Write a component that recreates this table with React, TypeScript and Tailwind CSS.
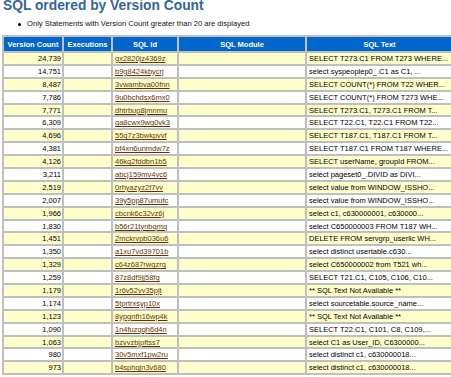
import React from "react";

const rows: [string, string, string][] = [
  ["24,739", "gx2820jz4369z", "SELECT T273.C1 FROM T273 WHERE..."],
  ["14,751", "b9g8424kbycrj", "select syspeoplep0_.C1 as C1, ..."],
  ["8,487", "3vwambva00fnn", "SELECT COUNT(*) FROM T22 WHER..."],
  ["7,786", "9u0bchdsx6mx0", "SELECT COUNT(*) FROM T273 WHE..."],
  ["7,771", "dhtrbup8jmnmu", "SELECT T273.C1, T273.C1 FROM T..."],
  ["6,309", "ga8cwx9wg0vk3", "SELECT T22.C1, T22.C1 FROM T22..."],
  ["4,696", "55q7z3bwkpvvf", "SELECT T187.C1, T187.C1 FROM T..."],
  ["4,381", "bf4xn6unmdw7z", "SELECT T187.C1 FROM T187 WHERE..."],
  ["4,126", "46kq2fddbn1b5", "SELECT userName, groupId FROM..."],
  ["3,211", "abcj159mv4vc6", "select pageset0_.DIVID as DIVI..."],
  ["2,519", "0rhyazyz2f7vv", "select value from WINDOW_ISSHO..."],
  ["2,007", "39y5pp87umufc", "select value from WINDOW_ISSHO..."],
  ["1,966", "cbcnk6c32vz6j", "select c1, c630000001, c630000..."],
  ["1,830", "b56r21tynbqmq", "select C650000003 FROM T187 WH..."],
  ["1,451", "2mckrvpb036u6", "DELETE FROM servgrp_userlic WH..."],
  ["1,350", "a1xu7vd39701b", "select distinct usertable.c630..."],
  ["1,329", "c64z687rwgzrg", "select C650000002 from T521 wh..."],
  ["1,259", "87z8df9jj58fg", "SELECT T21.C1, C105, C106, C10..."],
  ["1,179", "1r6v52vv35pjt", "** SQL Text Not Available **"],
  ["1,174", "5tprtrxsyp10x", "select sourcetable.source_name..."],
  ["1,123", "8ypgnfh16wp4k", "** SQL Text Not Available **"],
  ["1,090", "1n4fuzqqh6d4n", "SELECT T22.C1, C101, C8, C109,..."],
  ["1,063", "bzvvzbjpftss7", "select C1 as User_ID, C6300000..."],
  ["980", "30v5mxf1pw2ru", "select distinct c1, c630000018..."],
  ["973", "b4sphqjn3v680", "select distinct c1, c630000018..."],
];

const font = { fontFamily: '"Liberation Sans", Arial, sans-serif' };

export default function App() {
  return (
    <div
      className="w-[451px] h-[377px] overflow-hidden bg-white text-black"
      style={font}
    >
      <h3 className="mt-[-2px] ml-[3px] text-[13.8px] leading-[15px] font-bold text-[#336699] whitespace-nowrap">
        SQL ordered by Version Count
      </h3>
      <ul className="mt-[6px] ml-[18px]">
        <li className="flex items-center text-[7.6px] leading-[10px] whitespace-nowrap text-[#111]">
          <span className="w-[3px] h-[3px] rounded-full bg-black mr-[6px]" />
          Only Statements with Version Count greater than 20 are displayed
        </li>
      </ul>
      <table className="mt-[6px] ml-[2px] table-fixed border-separate border-spacing-[2px] bg-[#bfbfbf] w-[452px] text-[7.5px] leading-[9px]">
        <colgroup>
          <col className="w-[58px]" />
          <col className="w-[47px]" />
          <col className="w-[64px]" />
          <col className="w-[126px]" />
          <col className="w-[145px]" />
        </colgroup>
        <thead>
          <tr className="h-[14px]">
            {["Version Count", "Executions", "SQL Id", "SQL Module", "SQL Text"].map((h) => (
              <th
                key={h}
                className="bg-[#0066cc] text-white font-bold text-center p-0 whitespace-nowrap overflow-hidden"
              >
                {h}
              </th>
            ))}
          </tr>
        </thead>
        <tbody>
          {rows.map(([vc, id, txt], i) => {
            const bg = i % 2 === 0 ? "bg-[#ffffcc]" : "bg-white";
            return (
              <tr key={id} className="h-[10.9px]">
                <td className={`${bg} text-right pr-[1px] p-0 whitespace-nowrap`}>{vc}</td>
                <td className={`${bg} p-0`}></td>
                <td className={`${bg} pl-[2px] p-0 whitespace-nowrap overflow-hidden`}>
                  <span className="text-[#663300] underline">{id}</span>
                </td>
                <td className={`${bg} p-0`}></td>
                <td className={`${bg} pl-[2px] p-0 whitespace-nowrap overflow-hidden`}>{txt}</td>
              </tr>
            );
          })}
        </tbody>
      </table>
    </div>
  );
}
